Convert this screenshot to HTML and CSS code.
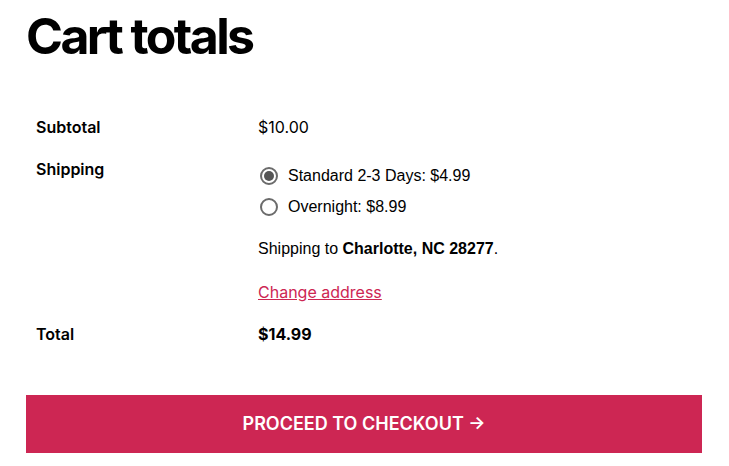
FILE: index.html
```html
<!DOCTYPE html>
<html lang="en">
<head>
    <meta charset="UTF-8">
    <meta name="viewport" content="width=device-width, initial-scale=1.0">
    <title>Cart totals</title>
    <link rel="stylesheet" href="styles.css">
</head>
<body>
    <div class="cart-totals">
        <h2>Cart totals</h2>

        <table class="totals-table">
            <tr>
                <th>Subtotal</th>
                <td class="amount">$10.00</td>
            </tr>
            <tr>
                <th>Shipping</th>
                <td>
                    <ul class="shipping-methods">
                        <li>
                            <label><input type="radio" name="shipping" checked> Standard 2-3 Days: $4.99</label>
                        </li>
                        <li>
                            <label><input type="radio" name="shipping"> Overnight: $8.99</label>
                        </li>
                    </ul>
                    <p class="destination">Shipping to <strong>Charlotte, NC 28277</strong>.</p>
                    <p class="change-row"><a href="#" class="change-address">Change address</a></p>
                </td>
            </tr>
            <tr>
                <th>Total</th>
                <td class="amount"><strong>$14.99</strong></td>
            </tr>
        </table>

        <a href="#" class="checkout-button">Proceed to checkout &rarr;</a>
    </div>
</body>
</html>
```

FILE: styles.css
```css
body {
    margin: 0;
    background-color: #fff;
    color: #000;
    font-family: "Liberation Sans", Arial, sans-serif;
    font-size: 16px;
}

.cart-totals {
    padding: 0 27px 0 26px;
}

h2 {
    font-family: Inter, sans-serif;
    font-size: 50px;
    font-weight: 700;
    letter-spacing: -2.6px;
    line-height: 60px;
    margin: 6px 0 0 0;
}

.totals-table {
    width: 100%;
    border-collapse: collapse;
    margin-top: 40px;
}

.totals-table th,
.totals-table td {
    padding: 9px 10px;
    line-height: 24px;
    text-align: left;
    vertical-align: top;
}

.totals-table th {
    width: 202px;
    font-family: Inter, sans-serif;
    font-size: 16px;
    font-weight: 600;
}

.amount {
    font-family: Inter, sans-serif;
    font-size: 16px;
}

.amount strong {
    font-weight: 700;
}

.shipping-methods {
    list-style: none;
    margin: 0;
    padding: 7px 0 0 0;
}

.shipping-methods li {
    margin-bottom: 7px;
}

.shipping-methods li:last-child {
    margin-bottom: 0;
}

.shipping-methods label {
    display: flex;
    align-items: center;
    gap: 10px;
    height: 24px;
}

.shipping-methods input {
    appearance: none;
    width: 18px;
    height: 18px;
    margin: 0 0 0 2px;
    border: 2px solid #6b6b6b;
    border-radius: 50%;
    box-sizing: border-box;
    display: inline-grid;
    place-items: center;
}

.shipping-methods input:checked::after {
    content: "";
    width: 10px;
    height: 10px;
    border-radius: 50%;
    background-color: #555;
}

.destination {
    margin: 18px 0 19px 0;
}

.change-row {
    margin: 0;
    height: 24px;
    font-family: Inter, sans-serif;
}

.change-address {
    color: #cd2653;
    text-decoration: underline;
}

.checkout-button {
    display: block;
    margin-top: 40px;
    padding: 17px 0;
    background-color: #cd2653;
    color: #fff;
    font-family: Inter, sans-serif;
    font-size: 18px;
    font-weight: 600;
    line-height: 24px;
    text-align: center;
    text-transform: uppercase;
    text-decoration: none;
}
```
